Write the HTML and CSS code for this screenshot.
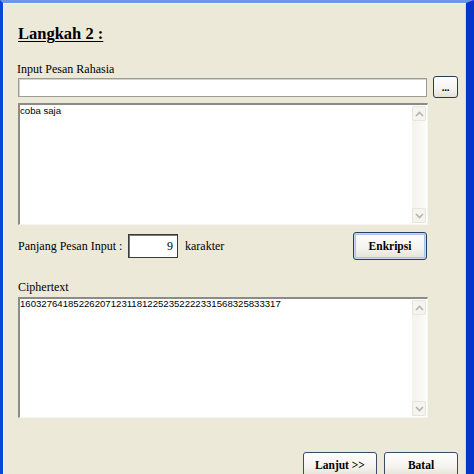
FILE: index.html
```html
<!DOCTYPE html>
<html>
<head>
<meta charset="utf-8">
<link rel="stylesheet" href="styles.css">
</head>
<body>
<div class="window">
  <div class="content">
    <h1 class="title">Langkah 2 :</h1>
    <div class="label lbl-input">Input Pesan Rahasia</div>
    <div class="file-row">
      <div class="textbox"></div>
      <div class="btn btn-browse">...</div>
    </div>
    <div class="memo memo-input">
      <div class="memo-text">coba saja</div>
      <div class="scrollbar">
        <div class="sb-btn"><svg width="9" height="6" viewBox="0 0 9 6"><path d="M1 5 L4.5 1.5 L8 5" fill="none" stroke="#b4b4b0" stroke-width="1.6"/></svg></div>
        <div class="sb-track"></div>
        <div class="sb-btn"><svg width="9" height="6" viewBox="0 0 9 6"><path d="M1 1 L4.5 4.5 L8 1" fill="none" stroke="#b4b4b0" stroke-width="1.6"/></svg></div>
      </div>
    </div>
    <div class="length-row">
      <span class="label len-label">Panjang Pesan Input :</span>
      <div class="numbox">9</div>
      <span class="label unit">karakter</span>
      <div class="btn btn-encrypt">Enkripsi</div>
    </div>
    <div class="label lbl-cipher">Ciphertext</div>
    <div class="memo memo-cipher">
      <div class="memo-text cipher-text">1603276418522620712311812252352222331568325833317</div>
      <div class="scrollbar">
        <div class="sb-btn"><svg width="9" height="6" viewBox="0 0 9 6"><path d="M1 5 L4.5 1.5 L8 5" fill="none" stroke="#b4b4b0" stroke-width="1.6"/></svg></div>
        <div class="sb-track"></div>
        <div class="sb-btn"><svg width="9" height="6" viewBox="0 0 9 6"><path d="M1 1 L4.5 4.5 L8 1" fill="none" stroke="#b4b4b0" stroke-width="1.6"/></svg></div>
      </div>
    </div>
    <div class="nav-row">
      <div class="btn btn-nav">Lanjut &gt;&gt;</div>
      <div class="btn btn-nav">Batal</div>
    </div>
  </div>
</div>
</body>
</html>
```
FILE: styles.css
```css
html, body {
  margin: 0;
  padding: 0;
  background: #ece9d8;
}
.window {
  width: 474px;
  height: 474px;
  box-sizing: border-box;
  overflow: hidden;
  background: #ece9d8;
  border-left: 3px solid #0b46d8;
  border-top: 3px solid #6f97e6;
  border-right: 8px solid #0533cc;
  box-shadow: inset 1px 1px 0 #f4f2ea, inset -1px 0 0 #dcd8c6;
}
.content {
  padding: 21px 8px 0 15px;
  display: flex;
  flex-direction: column;
  font-family: "Liberation Serif", "Times New Roman", serif;
  color: #000;
}
.title {
  margin: 0;
  font-size: 16.5px;
  line-height: 20px;
  font-weight: 700;
  text-decoration: underline;
  text-decoration-thickness: 1px;
  text-underline-offset: 2px;
}
.label {
  font-size: 12px;
  line-height: 14px;
}
.lbl-input {
  margin-top: 18px;
  margin-left: -1px;
}
.file-row {
  margin-top: 0;
  height: 22px;
  display: flex;
  align-items: flex-end;
}
.textbox {
  width: 410px;
  height: 19px;
  margin-bottom: 1px;
  box-sizing: border-box;
  background: #fff;
  border: 1px solid #9b9b98;
  box-shadow: inset 1px 1px 0 #d6d3c8;
}
.btn {
  box-sizing: border-box;
  display: flex;
  align-items: center;
  justify-content: center;
  border: 1px solid #2a3c52;
  border-radius: 3px;
  background: linear-gradient(#fefefe 0%, #f4f3ee 60%, #e4e1d6 100%);
  font-family: "Liberation Serif", "Times New Roman", serif;
  font-weight: 700;
  color: #000;
}
.btn-browse {
  width: 25px;
  height: 22px;
  margin-left: 6px;
  font-size: 11px;
  line-height: 12px;
  letter-spacing: -0.3px;
}
.memo {
  width: 410px;
  box-sizing: border-box;
  background: #fff;
  border-top: 2px solid #8c8b86;
  border-left: 2px solid #8c8b86;
  border-right: 1px solid #f6f5f1;
  border-bottom: 1px solid #f6f5f1;
  display: flex;
}
.memo-input {
  margin-top: 5px;
  height: 122px;
}
.memo-text {
  flex: 1;
  padding: 0 2px 0 0;
  font-family: "Liberation Sans", Arial, sans-serif;
  font-size: 9.6px;
  line-height: 11px;
}
.cipher-text {
  margin-top: -1px;
}
.scrollbar {
  width: 14px;
  margin: 1px 1px 1px 0;
  display: flex;
  flex-direction: column;
  background: linear-gradient(90deg, #f3f2ec, #fbfbf8);
}
.sb-btn {
  height: 15px;
  box-sizing: border-box;
  border: 1px solid #e6e5de;
  border-radius: 2px;
  background: #f5f4ef;
  display: flex;
  align-items: center;
  justify-content: center;
}
.sb-track {
  flex: 1;
}
.length-row {
  margin-top: 7px;
  height: 28px;
  display: flex;
  align-items: center;
}
.len-label {
  width: 110px;
}
.numbox {
  width: 50px;
  height: 24px;
  box-sizing: border-box;
  background: #fff;
  border: 1px solid #3a3a38;
  box-shadow: inset 1px 1px 0 #7a7a78;
  font-size: 12px;
  line-height: 22px;
  text-align: right;
  padding-right: 4px;
}
.unit {
  margin-left: 7px;
}
.btn-encrypt {
  margin-left: auto;
  margin-right: 31px;
  width: 74px;
  height: 28px;
  font-size: 11.5px;
  border-color: #24405e;
  box-shadow: inset 0 0 0 1px #c8d8f4, inset 0 0 0 2px #a9c3ec;
}
.lbl-cipher {
  margin-top: 20px;
}
.memo-cipher {
  margin-top: 3px;
  height: 121px;
}
.nav-row {
  margin-top: 34px;
  display: flex;
  justify-content: flex-end;
  gap: 7px;
}
.btn-nav {
  width: 74px;
  height: 25px;
  font-size: 11.5px;
  border-color: #3a4c60;
}
```
